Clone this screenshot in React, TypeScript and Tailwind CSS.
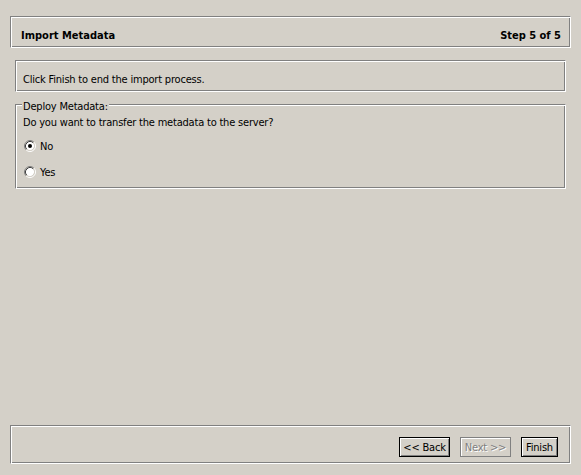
import React from "react";

const etched =
  "border border-t-[#808080] border-l-[#808080] border-r-white border-b-white shadow-[inset_1px_1px_0_#ffffff,inset_-1px_-1px_0_#808080]";

const RadioDot = ({ checked }: { checked: boolean }) => (
  <svg width="12" height="12" viewBox="0 0 12 12" className="shrink-0">
    <circle cx="6" cy="6" r="4.2" fill="#ffffff" />
    <path d="M2.11 9.89 A5.5 5.5 0 0 1 9.89 2.11" fill="none" stroke="#808080" strokeWidth="1" />
    <path d="M9.89 2.11 A5.5 5.5 0 0 1 2.11 9.89" fill="none" stroke="#ffffff" strokeWidth="1" />
    <path d="M2.82 9.18 A4.5 4.5 0 0 1 9.18 2.82" fill="none" stroke="#404040" strokeWidth="1" />
    <path d="M9.18 2.82 A4.5 4.5 0 0 1 2.82 9.18" fill="none" stroke="#d4d0c8" strokeWidth="1" />
    {checked && <circle cx="6" cy="6" r="2" fill="#000000" />}
  </svg>
);

const Radio = ({ label, checked }: { label: string; checked: boolean }) => (
  <label className="flex h-[26px] items-center gap-[4px] pl-[8px]">
    <RadioDot checked={checked} />
    <span>{label}</span>
  </label>
);

const WizButton = ({
  label,
  width,
  disabled,
}: {
  label: string;
  width: string;
  disabled?: boolean;
}) =>
  disabled ? (
    <button
      disabled
      className={`${width} h-[20px] border border-[#808080] bg-[#d4d0c8] shadow-[inset_1px_1px_0_#ffffff] text-[#808080] [text-shadow:1px_1px_0_#ffffff]`}
    >
      {label}
    </button>
  ) : (
    <button
      className={`${width} h-[20px] border border-black bg-[#d4d0c8] shadow-[inset_1px_1px_0_#ffffff,inset_-1px_-1px_0_#808080] text-black`}
    >
      {label}
    </button>
  );

export default function App() {
  return (
    <div className="w-[581px] h-[475px] bg-[#d4d0c8] flex flex-col text-[11px] leading-[13px] tracking-[-0.2px] text-black font-['DejaVu_Sans_Condensed','Liberation_Sans',sans-serif]">
      <div className={`mx-[10px] mt-[16px] h-[32px] flex items-start justify-between pt-[12px] pl-[10px] pr-[9px] tracking-normal ${etched}`}>
        <span className="font-bold">Import Metadata</span>
        <span className="font-bold">Step 5 of 5</span>
      </div>

      <div className={`mx-[15px] mt-[12px] h-[32px] pt-[12px] pl-[7px] ${etched}`}>
        Click Finish to end the import process.
      </div>

      <div className={`relative mx-[15px] mt-[12px] h-[85px] pt-[11px] pl-[7px] ${etched}`}>
        <span className="absolute left-[6px] top-[-5px] bg-[#d4d0c8] px-[1px]">
          Deploy Metadata:
        </span>
        <p>Do you want to transfer the metadata to the server?</p>
        <div className="mt-[4px] -ml-[7px] flex flex-col">
          <Radio label="No" checked />
          <Radio label="Yes" checked={false} />
        </div>
      </div>

      <div className="flex-1" />

      <div className={`mx-[10px] mb-[11px] h-[39px] flex items-start justify-end gap-[10px] pt-[11px] pr-[12px] ${etched}`}>
        <WizButton label="<< Back" width="w-[51px]" />
        <WizButton label="Next >>" width="w-[51px]" disabled />
        <WizButton label="Finish" width="w-[37px]" />
      </div>
    </div>
  );
}
